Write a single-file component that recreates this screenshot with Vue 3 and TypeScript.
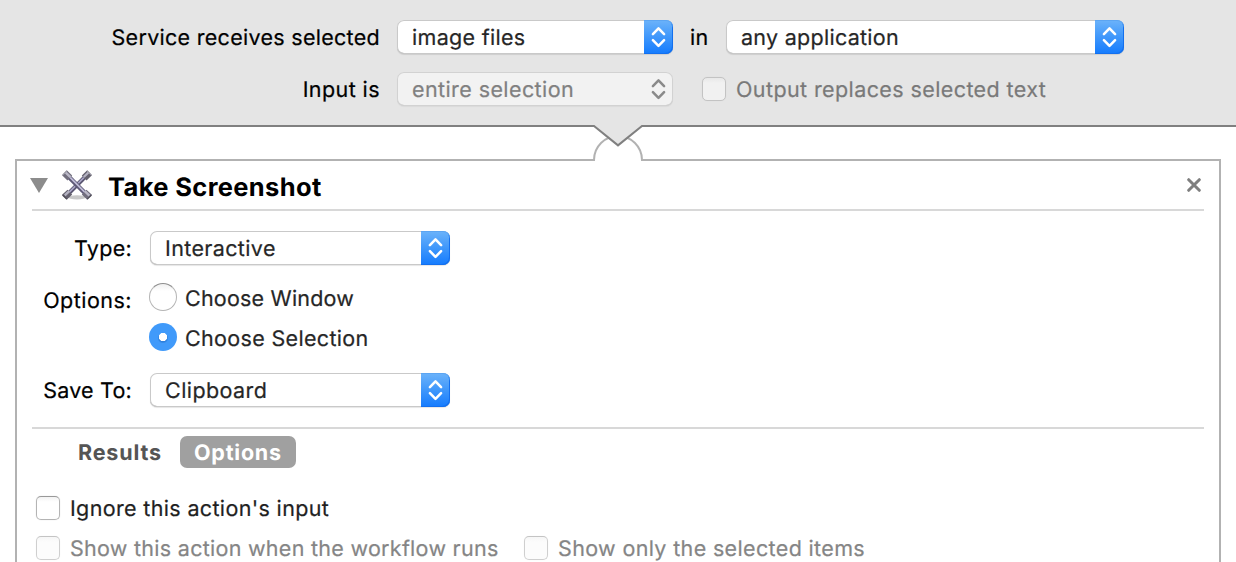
<script setup lang="ts">
import { defineComponent, h, ref } from 'vue'

const PopUp = defineComponent({
  props: { value: { type: String, required: true }, disabled: Boolean },
  setup(props) {
    return () =>
      h('div', { class: ['popup', { disabled: props.disabled }] }, [
        h('span', { class: 'popup-value' }, props.value),
        h('span', { class: 'popup-arrows' }, [
          h('svg', { width: 29, height: 34, viewBox: '0 0 29 34' }, [
            h('path', { d: 'M8.9 14.2 L14.5 8.4 L20.1 14.2 M8.9 20.1 L14.5 25.9 L20.1 20.1' }),
          ]),
        ]),
      ])
  },
})

const mode = ref<'window' | 'selection'>('selection')
</script>

<template>
  <div class="automator">
    <header class="service">
      <div class="row">
        <span class="label service-label">Service receives selected</span>
        <PopUp class="input-type" value="image files" />
        <span class="in">in</span>
        <PopUp class="application" value="any application" />
      </div>
      <div class="row">
        <span class="label input-label">Input is</span>
        <PopUp class="selection" value="entire selection" disabled />
        <span class="check disabled output"><i class="box"></i><span>Output replaces selected text</span></span>
      </div>
    </header>

    <svg class="connector" width="56" height="40" viewBox="590 123 56 40">
      <path d="M595 162 V158 H641 V162 Z" fill="#fff" />
      <path d="M594 161 V160 A24 24 0 0 1 642 160 V161" fill="#fff" stroke="#b2b2b2" stroke-width="2" />
      <path d="M593 123 V126 H594 L618 145.4 L642 126 H643 V123 Z" fill="#e5e5e5" />
      <path d="M590 126 H594 L618 145.4 L642 126 H646" fill="none" stroke="#808080" stroke-width="2" />
    </svg>

    <section class="action">
      <div class="title-bar">
        <svg class="disclosure" width="18" height="15" viewBox="0 0 18 15"><path d="M0 0 H18 L9 15 Z" fill="#8c8c8c" /></svg>
        <svg class="tool" width="30" height="31" viewBox="0.5 0 31 32">
          <ellipse cx="16" cy="28.2" rx="9.5" ry="2.2" fill="#c8c8c8" />
          <g fill="none">
            <path d="M7 24.5 L25 6.5" stroke="#57536f" stroke-width="4.2" />
            <path d="M7 23.9 L24.6 6.3" stroke="#a9a5c6" stroke-width="1.7" />
            <path d="M3 28.2 L8.6 22.8 M23.4 8.2 L29 2.8" stroke="#65626f" stroke-width="7" />
            <path d="M3.4 26.2 L8 21.8 M23 7.2 L27.8 2.6" stroke="#b4b2c2" stroke-width="2.4" />
            <path d="M7 6.5 L25 24.5" stroke="#5d5876" stroke-width="4.6" />
            <path d="M7.6 6.4 L25 23.8" stroke="#c0bdd8" stroke-width="1.8" />
            <path d="M3 2.8 L8.6 8.2 M23.4 22.8 L29 28.2" stroke="#716e7d" stroke-width="7" />
            <path d="M4.4 2.8 L9.2 7.4 M24 21.8 L28.8 26.4" stroke="#bab8c7" stroke-width="2.5" />
            <path d="M1 5.2 L5.4 0.9 M26.6 0.9 L31 5.2" stroke="#a5a3ad" stroke-width="1.2" />
            <path d="M1 25.8 L5.4 30.1 M26.6 30.1 L31 25.8" stroke="#4c4a55" stroke-width="1.2" />
          </g>
        </svg>
        <h1 class="title">Take Screenshot</h1>
        <svg class="close" width="14" height="14" viewBox="0 0 14 14"><path d="M1.7 1.7 L12.3 12.3 M12.3 1.7 L1.7 12.3" stroke="#7f7f7f" stroke-width="3" stroke-linecap="round" /></svg>
      </div>
      <div class="rule"></div>

      <div class="form">
        <span class="label type">Type:</span>
        <PopUp class="interactive" value="Interactive" />
        <span class="label opts">Options:</span>
        <div class="radios">
          <label class="radio" @click="mode = 'window'"><i class="dot" :class="{ on: mode === 'window' }"></i><span class="window">Choose Window</span></label>
          <label class="radio" @click="mode = 'selection'"><i class="dot" :class="{ on: mode === 'selection' }"></i><span class="choose">Choose Selection</span></label>
        </div>
        <span class="label save">Save To:</span>
        <PopUp class="clipboard" value="Clipboard" />
      </div>
      <div class="rule"></div>

      <nav class="tabs"><span class="tab">Results</span><span class="tab active">Options</span></nav>
      <div class="check ignore"><i class="box"></i><span>Ignore this action's input</span></div>
      <div class="checks">
        <div class="check disabled show"><i class="box"></i><span>Show this action when the workflow runs</span></div>
        <div class="check disabled only"><i class="box"></i><span>Show only the selected items</span></div>
      </div>
    </section>
  </div>
</template>

<style>
body { margin: 0; background: #fff; overflow: hidden; }
</style>

<style scoped>
.automator {
  position: relative;
  width: 1236px;
  height: 562px;
  overflow: hidden;
  box-sizing: border-box;
  background: #fff;
  color: #000;
  font: 21.5px/36px Inter, "Liberation Sans", sans-serif;
  letter-spacing: 0.4px;
  white-space: nowrap;
  text-rendering: geometricPrecision;
  -webkit-text-stroke: 0.2px;
}
.service {
  box-sizing: border-box;
  height: 127px;
  padding-top: 20px;
  display: flex;
  flex-direction: column;
  gap: 18px;
  background: #e5e5e5;
  border-bottom: 2px solid #808080;
}
.row { display: flex; height: 34px; align-items: flex-start; }
.row .label { width: 380px; margin-right: 17px; }
.label { text-align: right; }
.service-label { letter-spacing: 0.29px; }
.input-label { letter-spacing: 0.42px; }
.in { width: 36px; margin-left: 17px; letter-spacing: 0.4px; }

:deep(.popup) {
  box-sizing: border-box;
  display: flex;
  justify-content: space-between;
  height: 34px;
  padding-left: 15px;
  border-radius: 7px;
  background: #fff;
  color: #262626;
  box-shadow: inset 0 0 0 1px #c9c9c9, inset 0 -1px 0 #aaa, 0 1px 1px rgba(0, 0, 0, 0.1);
}
:deep(.popup-arrows) {
  width: 29px;
  height: 34px;
  border-radius: 0 7px 7px 0;
  background: linear-gradient(#6cb3fa, #3f97fb 50%, #147bfe);
  box-shadow: inset 0 1px 0 #5ca5f2, inset -1px -1px 0 #1470ee;
}
:deep(.popup-arrows svg) { display: block; }
:deep(.popup-arrows path) { fill: none; stroke: #fff; stroke-width: 2.5; stroke-linecap: round; stroke-linejoin: round; }
:deep(.popup.disabled) {
  background: #f2f2f2;
  color: #808080;
  box-shadow: inset 0 0 0 1px #d2d2d2, inset 0 -1px 0 #c4c4c4, 0 1px 1px rgba(0, 0, 0, 0.05);
}
:deep(.popup.disabled .popup-arrows) { background: none; box-shadow: none; }
:deep(.popup.disabled path) { stroke: #8a8a8a; }
.input-type { width: 276px; letter-spacing: 0.3px; }
.application { width: 398px; letter-spacing: 0.28px; }
.selection { width: 276px; letter-spacing: 0.41px; }

.check { display: flex; align-items: center; gap: 10px; height: 34px; color: #1f1f1f; }
.check span { padding-top: 2px; letter-spacing: 0.35px; }
.box {
  box-sizing: border-box;
  flex: none;
  width: 24px;
  height: 24px;
  border: 1px solid #b4b4b4;
  border-top-color: #999;
  border-radius: 5px;
  background: linear-gradient(#f3f3f3, #fff 5px);
  box-shadow: 0 0 1px rgba(0, 0, 0, 0.2);
}
.check.disabled { color: #858585; }
.disabled .box { border-color: #cfcfcf; border-top-color: #c4c4c4; background: linear-gradient(#f6f6f6, #fcfcfc 5px); box-shadow: 0 0 1px rgba(0, 0, 0, 0.08); }
.check.output { margin-left: 29px; color: #797979; }
.output .box { border-color: #c3c3c3; background: linear-gradient(#e8e8e8, #f1f1f1 5px); }
.check.output span { letter-spacing: 0.4px; }

.connector { position: absolute; left: 590px; top: 123px; }

.action {
  box-sizing: border-box;
  width: 1206px;
  height: 430px;
  margin: 32px 0 0 15px;
  border: 2px solid #b2b2b2;
}
.title-bar { display: flex; align-items: center; height: 48px; padding: 0 18px 0 13px; }
.tool { margin: 1px 0 0 14px; }
.title { margin: 5px auto 0 16px; font-size: 25.5px; font-weight: 700; line-height: 34px; letter-spacing: 0.36px; -webkit-text-stroke: 0; }
.rule { height: 2px; margin: 0 15px; background: #d8d8d8; }

.form {
  box-sizing: border-box;
  display: grid;
  grid-template-columns: 115px 300px;
  grid-template-rows: 34px 108px 34px;
  column-gap: 18px;
  height: 216px;
  padding-top: 20px;
}
.type { letter-spacing: 0.3px; }
.opts { padding-top: 18px; letter-spacing: 0.48px; }
.save { letter-spacing: 0.22px; }
.radios { display: flex; flex-direction: column; gap: 12px; padding-top: 18px; margin-left: -1px; }
.radio { display: flex; gap: 8px; height: 28px; line-height: 32px; color: #262626; }
.dot {
  box-sizing: border-box;
  width: 28px;
  height: 28px;
  border: 1px solid #b5b5b5;
  border-top-color: #8e8e8e;
  border-radius: 50%;
  background: linear-gradient(#f0f0f0, #fff 7px);
}
.dot.on { border: 0; background: radial-gradient(circle, #fff 3.8px, transparent 4.5px), radial-gradient(circle at 14px 15px, #2d7fdc 4px, transparent 5.5px), #409afa; }
.window { letter-spacing: 0.2px; }
.choose { letter-spacing: 0.33px; }
.interactive { letter-spacing: 0.37px; }
.clipboard { letter-spacing: 0.42px; }

.tabs { display: flex; height: 32px; margin-top: 7px; padding-left: 61px; line-height: 34px; font-weight: 700; letter-spacing: 0.85px; color: #555; -webkit-text-stroke: 0; }
.tab { width: 102px; }
.tab.active { box-sizing: border-box; width: 116px; padding-left: 14px; border-radius: 7px; background: #a0a0a0; color: #fff; letter-spacing: 0.77px; }
.check.ignore { margin: 23px 0 0 19px; }
.checks { display: flex; gap: 26px; margin: 6px 0 0 19px; }
.check.show { width: 462px; flex: none; }
.check.show span { letter-spacing: 0.28px; }
</style>
